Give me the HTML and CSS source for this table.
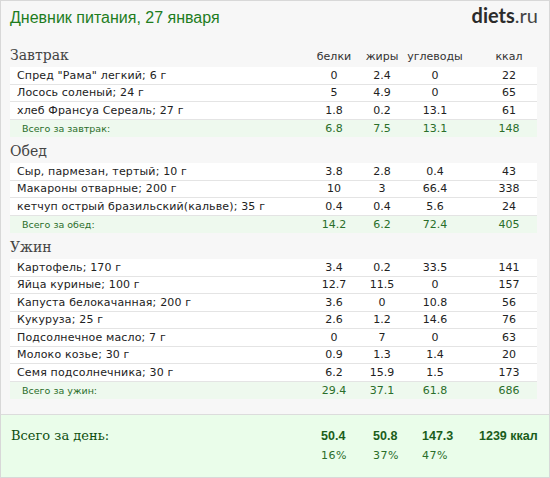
FILE: index.html
```html
<!DOCTYPE html>
<html lang="ru">
<head>
<meta charset="utf-8">
<link rel="stylesheet" href="styles.css">
</head>
<body>
<div class="page">
  <div class="top">
    <div class="header">
      <div class="title">Дневник питания, 27 января</div>
      <div class="logo"><b>diets</b>.ru</div>
    </div>

    <div class="section">
      <div class="sec-head">
        <div class="sec-name">Завтрак</div>
        <div class="col">белки</div>
        <div class="col">жиры</div>
        <div class="col">углеводы</div>
        <div class="col kcal">ккал</div>
      </div>
      <div class="row"><div class="name">Спред "Рама" легкий; 6 г</div><div class="col">0</div><div class="col">2.4</div><div class="col">0</div><div class="col kcal">22</div></div>
      <div class="row"><div class="name">Лосось соленый; 24 г</div><div class="col">5</div><div class="col">4.9</div><div class="col">0</div><div class="col kcal">65</div></div>
      <div class="row"><div class="name">хлеб Франсуа Сереаль; 27 г</div><div class="col">1.8</div><div class="col">0.2</div><div class="col">13.1</div><div class="col kcal">61</div></div>
      <div class="row total"><div class="name">Всего за завтрак:</div><div class="col">6.8</div><div class="col">7.5</div><div class="col">13.1</div><div class="col kcal">148</div></div>
    </div>

    <div class="section">
      <div class="sec-head">
        <div class="sec-name">Обед</div>
      </div>
      <div class="row"><div class="name">Сыр, пармезан, тертый; 10 г</div><div class="col">3.8</div><div class="col">2.8</div><div class="col">0.4</div><div class="col kcal">43</div></div>
      <div class="row"><div class="name">Макароны отварные; 200 г</div><div class="col">10</div><div class="col">3</div><div class="col">66.4</div><div class="col kcal">338</div></div>
      <div class="row"><div class="name">кетчуп острый бразильский(кальве); 35 г</div><div class="col">0.4</div><div class="col">0.4</div><div class="col">5.6</div><div class="col kcal">24</div></div>
      <div class="row total"><div class="name">Всего за обед:</div><div class="col">14.2</div><div class="col">6.2</div><div class="col">72.4</div><div class="col kcal">405</div></div>
    </div>

    <div class="section">
      <div class="sec-head">
        <div class="sec-name">Ужин</div>
      </div>
      <div class="row"><div class="name">Картофель; 170 г</div><div class="col">3.4</div><div class="col">0.2</div><div class="col">33.5</div><div class="col kcal">141</div></div>
      <div class="row"><div class="name">Яйца куриные; 100 г</div><div class="col">12.7</div><div class="col">11.5</div><div class="col">0</div><div class="col kcal">157</div></div>
      <div class="row"><div class="name">Капуста белокачанная; 200 г</div><div class="col">3.6</div><div class="col">0</div><div class="col">10.8</div><div class="col kcal">56</div></div>
      <div class="row"><div class="name">Кукуруза; 25 г</div><div class="col">2.6</div><div class="col">1.2</div><div class="col">14.6</div><div class="col kcal">76</div></div>
      <div class="row"><div class="name">Подсолнечное масло; 7 г</div><div class="col">0</div><div class="col">7</div><div class="col">0</div><div class="col kcal">63</div></div>
      <div class="row"><div class="name">Молоко козье; 30 г</div><div class="col">0.9</div><div class="col">1.3</div><div class="col">1.4</div><div class="col kcal">20</div></div>
      <div class="row"><div class="name">Семя подсолнечника; 30 г</div><div class="col">6.2</div><div class="col">15.9</div><div class="col">1.5</div><div class="col kcal">173</div></div>
      <div class="row total"><div class="name">Всего за ужин:</div><div class="col">29.4</div><div class="col">37.1</div><div class="col">61.8</div><div class="col kcal">686</div></div>
    </div>
  </div>

  <div class="day">
    <div class="day-row">
      <div class="day-label">Всего за день:</div>
      <div class="day-val">50.4</div>
      <div class="day-val">50.8</div>
      <div class="day-val">147.3</div>
      <div class="day-val">1239 ккал</div>
    </div>
    <div class="day-row pct">
      <div class="day-label"></div>
      <div class="day-pct">16%</div>
      <div class="day-pct">37%</div>
      <div class="day-pct">47%</div>
      <div class="day-pct"></div>
    </div>
  </div>
</div>
</body>
</html>
```

FILE: styles.css
```css
html, body {
  margin: 0;
  padding: 0;
  background: #ffffff;
}

.page {
  width: 548px;
  height: 476px;
  border: 1px solid #d8d8d8;
  background: #f7f7f7;
  display: flex;
  flex-direction: column;
  font-family: "DejaVu Sans", Verdana, sans-serif;
  color: #222;
}

.top {
  padding: 0 0 0 9px;
  height: 414px;
  border-bottom: 1px solid #dcdcdc;
  box-sizing: border-box;
}

.header {
  height: 40px;
  display: flex;
  justify-content: space-between;
  align-items: flex-start;
  padding-right: 11px;
  box-sizing: border-box;
}

.title {
  font-family: "Liberation Sans", Arial, sans-serif;
  font-size: 16px;
  line-height: 20px;
  color: #1e7d1e;
  padding-top: 7px;
}

.logo {
  font-family: "Lato", "Open Sans", sans-serif;
  font-size: 20px;
  line-height: 20px;
  padding-top: 4px;
  color: #444;
}

.logo b {
  font-weight: 700;
  color: #2b2b2b;
}

.section {
  width: 527px;
}

.sec-head {
  height: 26px;
  display: grid;
  grid-template-columns: 300px 48px 48px 58px 73px;
  align-items: end;
  padding-bottom: 4px;
  box-sizing: border-box;
}

.sec-name {
  font-family: "DejaVu Serif", "Liberation Serif", serif;
  font-size: 14px;
  line-height: 16px;
  color: #444;
}

.sec-head .col {
  font-size: 11px;
  line-height: 13px;
  color: #333;
  text-align: center;
}

.row {
  display: grid;
  grid-template-columns: 300px 48px 48px 58px 73px;
  align-items: center;
  height: 17.5px;
  box-sizing: border-box;
  background: #fff;
  border-bottom: 1px solid #e4e4e4;
  font-size: 11px;
}

.row .name {
  padding-left: 7px;
  white-space: nowrap;
  letter-spacing: 0.15px;
}

.row .col {
  text-align: center;
}

.col.kcal {
  padding-left: 17px;
}

.row.total {
  background: #eef9ee;
  border-bottom: none;
  color: #2a6e2a;
}

.row.total .name {
  padding-left: 12px;
  font-size: 9.5px;
  letter-spacing: 0;
}

.day {
  flex: 1;
  background: #eafdea;
  padding-top: 13px;
  box-sizing: border-box;
}

.day-row {
  display: grid;
  grid-template-columns: 320px 52px 49px 57px 70px;
  align-items: end;
}

.day-label {
  font-family: "DejaVu Serif", "Liberation Serif", serif;
  font-size: 13px;
  line-height: 16px;
  color: #0f4f0f;
  padding-left: 10px;
  white-space: nowrap;
}

.day-val {
  font-family: "Liberation Sans", Arial, sans-serif;
  font-weight: bold;
  font-size: 12.5px;
  line-height: 16px;
  color: #1b5e1b;
  white-space: nowrap;
}

.pct {
  margin-top: 5px;
}

.day-pct {
  font-size: 11px;
  line-height: 14px;
  color: #2a6e2a;
  letter-spacing: 0.5px;
}
```
